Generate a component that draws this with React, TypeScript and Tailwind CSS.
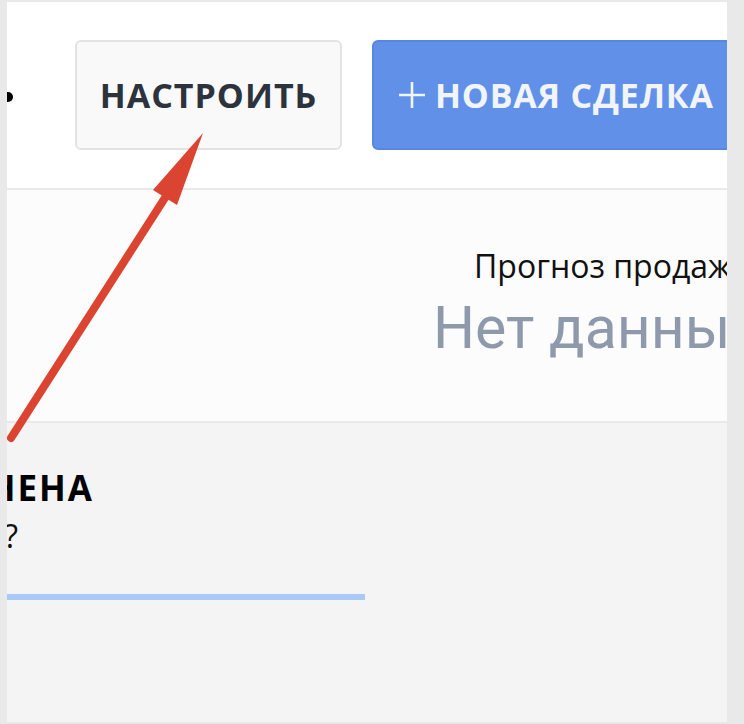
export default function App() {
  return (
    <div className="w-[744px] h-[724px] bg-[#e9e9e9] pl-[7px] pt-[2px]" style={{ fontFamily: '"Open Sans", "Liberation Sans", sans-serif' }}>
      <div className="relative w-[720px] h-[720px] overflow-hidden flex flex-col bg-white">
        {/* toolbar */}
        <div className="h-[186px] bg-white flex items-start pt-[38px] shrink-0">
          <div className="shrink-0 w-[6px] h-[10px] mt-[52px] rounded-r-full bg-black" />
          <button className="shrink-0 ml-[62px] w-[267px] h-[110px] rounded-[6px] border-2 border-[#e2e3e4] bg-[#f9f9f9] flex items-center justify-center text-[#2d333d] text-[34px] font-bold tracking-[1px]">
            НАСТРОИТЬ
          </button>
          <button className="ml-[30px] shrink-0 h-[110px] w-[400px] rounded-l-[6px] border-2 border-[#5a86dd] bg-[#6090e8] flex items-center pl-[24px] text-[#f1f4f9] text-[34px] font-bold tracking-[0.8px] whitespace-nowrap">
            <svg width="28" height="28" viewBox="0 0 28 28" className="mr-[9px]">
              <path d="M14 1v26M1 14h26" stroke="#f1f4f9" strokeWidth="2.6" />
            </svg>
            НОВАЯ СДЕЛКА
          </button>
        </div>
        <div className="h-[2px] bg-[#e8e9eb] shrink-0" />
        {/* stats */}
        <div className="h-[231px] bg-[#fcfcfc] shrink-0 pt-[56px] whitespace-nowrap">
          <div className="pl-[467px] text-[32px] text-[#111] leading-[40px]">Прогноз продаж</div>
          <div className="pl-[426px] text-[59px] text-[#8e99ab] leading-[64px] mt-[10px]" style={{ fontFamily: 'Roboto, "Open Sans", sans-serif' }}>
            Нет данных
          </div>
        </div>
        <div className="h-[2px] bg-[#e8e9eb] shrink-0" />
        {/* goals */}
        <div className="flex-1 bg-[#f4f4f4] pt-[41px]">
          <div className="w-[87px] flex justify-end whitespace-nowrap text-[35px] font-bold tracking-[2px] text-black leading-[48px]">
            НЕ ЗАПОЛНЕНА
          </div>
          <div className="w-[11px] flex justify-end whitespace-nowrap text-[32px] text-[#111] leading-[44px] mt-[2px]">
            Что это?
          </div>
          <div className="mt-[36px] w-[358px] h-[6px] bg-[#a9c9f7]" />
        </div>
        {/* annotation arrow */}
        <svg className="absolute left-0 top-0 pointer-events-none" width="720" height="720" viewBox="0 0 720 720">
          <line x1="4" y1="436" x2="163" y2="188" stroke="#db4430" strokeWidth="8" strokeLinecap="round" />
          <polygon points="196,131 146,188 170,203" fill="#db4430" />
        </svg>
      </div>
    </div>
  );
}
